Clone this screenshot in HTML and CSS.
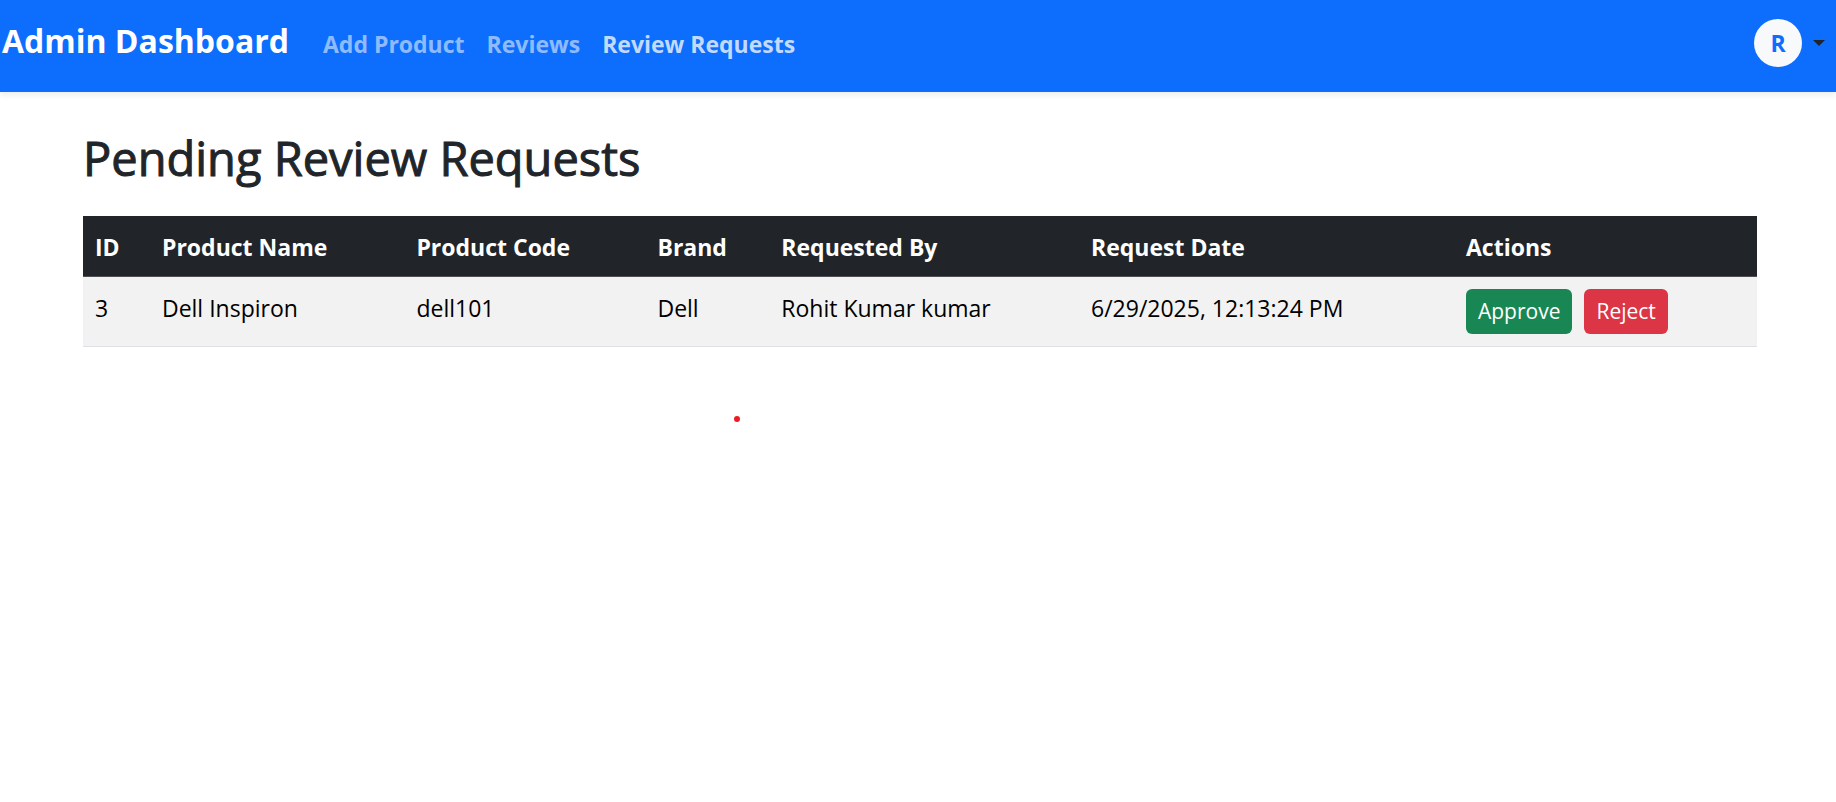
FILE: index.html
```html
<!DOCTYPE html>
<html lang="en">
<head>
<meta charset="utf-8">
<meta name="viewport" content="width=device-width, initial-scale=1">
<title>Admin Dashboard</title>
<link rel="stylesheet" href="styles.css">
</head>
<body>
<header class="navbar">
  <a class="brand" href="#">Admin Dashboard</a>
  <nav class="nav">
    <a class="nav-link" href="#">Add Product</a>
    <a class="nav-link" href="#">Reviews</a>
    <a class="nav-link nav-link-active" href="#" aria-current="page">Review Requests</a>
  </nav>
  <button class="profile" type="button" aria-label="Account menu">
    <span class="avatar">R</span>
    <span class="caret"></span>
  </button>
</header>
<main class="container">
  <h2 class="title">Pending Review Requests</h2>
  <table class="table">
    <colgroup>
      <col class="col-id"><col class="col-name"><col class="col-code"><col class="col-brand"><col class="col-by"><col class="col-date"><col class="col-actions">
    </colgroup>
    <thead>
      <tr>
        <th scope="col">ID</th>
        <th scope="col">Product Name</th>
        <th scope="col">Product Code</th>
        <th scope="col">Brand</th>
        <th scope="col">Requested By</th>
        <th scope="col">Request Date</th>
        <th scope="col">Actions</th>
      </tr>
    </thead>
    <tbody>
      <tr>
        <td>3</td>
        <td>Dell Inspiron</td>
        <td>dell101</td>
        <td>Dell</td>
        <td>Rohit Kumar kumar</td>
        <td>6/29/2025, 12:13:24 PM</td>
        <td>
          <div class="actions">
            <button class="btn btn-approve" type="button">Approve</button>
            <button class="btn btn-reject" type="button">Reject</button>
          </div>
        </td>
      </tr>
    </tbody>
  </table>
</main>
<span class="pointer-dot"></span>
</body>
</html>
```
FILE: styles.css
```css
* {
  box-sizing: border-box;
}

body {
  margin: 0;
  background: #fff;
  color: #212529;
  font-family: "Segoe UI", "Open Sans", "Noto Sans", sans-serif;
  font-size: 23px;
  line-height: 36px;
}

.navbar {
  display: flex;
  align-items: flex-start;
  padding: 12px 11px 20px 2px;
  background: #0d6efd;
  box-shadow: 0 3px 6px rgba(0, 0, 0, 0.075);
}

.brand {
  padding: 5px 0 7px;
  color: #fff;
  font-size: 32px;
  font-weight: 700;
  line-height: 48px;
  text-decoration: none;
}

.nav {
  display: flex;
  gap: 22px;
  margin-left: 34px;
  padding: 14px 0 10px;
}

.nav-link {
  color: rgba(255, 255, 255, 0.55);
  font-weight: 700;
  text-decoration: none;
}

.nav-link-active {
  color: rgba(255, 255, 255, 0.75);
}

.profile {
  display: flex;
  align-items: center;
  gap: 11px;
  margin-left: auto;
  padding: 7px 0 0;
  border: 0;
  background: none;
  color: #212529;
  font: inherit;
}

.avatar {
  display: grid;
  place-items: center;
  width: 48px;
  height: 48px;
  border-radius: 50%;
  background: #f8f9fa;
  color: #0d6efd;
  font-weight: 700;
}

.caret {
  border-top: 6px solid #212529;
  border-right: 6px solid transparent;
  border-left: 6px solid transparent;
}

.container {
  padding: 36px 79px 0 83px;
}

.title {
  margin: 0 0 28px;
  font-size: 47px;
  font-weight: 500;
  line-height: 60px;
  -webkit-text-stroke: 1px currentColor;
}

.table {
  width: 100%;
  border-collapse: separate;
  border-spacing: 0;
  table-layout: fixed;
  color: #000;
}

.col-id { width: 4%; }
.col-name { width: 15.2%; }
.col-code { width: 14.4%; }
.col-brand { width: 7.4%; }
.col-by { width: 18.5%; }
.col-date { width: 22.4%; }
.col-actions { width: 18.1%; }

.table th,
.table td {
  padding: 12px;
  text-align: left;
  vertical-align: top;
}

.table th {
  padding: 13px 12px 11px;
  border-bottom: 1px solid #4d5154;
  background: #212529;
  color: #fff;
  font-weight: 700;
}

.table td {
  border-bottom: 1px solid #dee2e6;
  background: #f2f2f2;
  line-height: 38px;
}

.actions {
  display: flex;
  gap: 12px;
}

.btn {
  padding: 6px 12px;
  border: 0;
  border-radius: 6px;
  color: #fff;
  font: inherit;
  font-size: 21px;
  line-height: 33px;
}

.btn-approve {
  background: #198754;
}

.btn-reject {
  background: #dc3545;
}

.pointer-dot {
  position: absolute;
  top: 416px;
  left: 734px;
  width: 6px;
  height: 6px;
  border-radius: 50%;
  background: #ed1c24;
}
```
